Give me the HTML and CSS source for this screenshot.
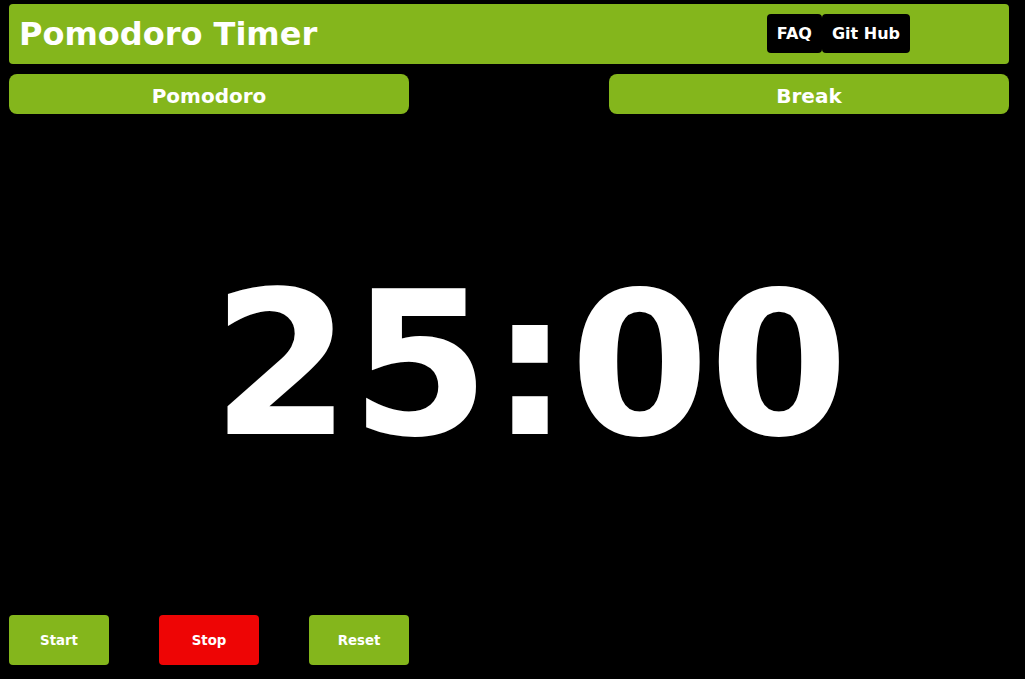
FILE: index.html
```html
<!DOCTYPE html>
<html lang="en">
<head>
<meta charset="utf-8">
<title>Pomodoro Timer</title>
<link rel="stylesheet" href="styles.css">
</head>
<body>
<div class="app">
  <header class="topbar">
    <h1 class="title">Pomodoro Timer</h1>
    <nav class="links">
      <a class="link" href="#">FAQ</a>
      <a class="link" href="#">Git Hub</a>
    </nav>
  </header>
  <div class="modes">
    <button class="mode">Pomodoro</button>
    <button class="mode">Break</button>
  </div>
  <div class="timer">25:00</div>
  <div class="controls">
    <button class="ctl ctl-green">Start</button>
    <button class="ctl ctl-red">Stop</button>
    <button class="ctl ctl-green">Reset</button>
  </div>
</div>
</body>
</html>
```
FILE: styles.css
```css
html, body {
  margin: 0;
  padding: 0;
  background: #000;
  height: 100%;
}
body {
  font-family: "DejaVu Sans", sans-serif;
  color: #fff;
}
.app {
  width: 1000px;
  margin-left: 9px;
  padding-top: 4px;
  display: flex;
  flex-direction: column;
  height: 675px;
}
.topbar {
  height: 60px;
  background: #84b61c;
  border-radius: 4px;
  display: flex;
  align-items: center;
  padding-left: 10px;
  box-sizing: border-box;
}
.title {
  margin: 0;
  font-size: 32px;
  font-weight: bold;
  flex: 1;
}
.links {
  display: flex;
  margin-right: 99px;
  margin-bottom: 2px;
}
.link {
  display: block;
  background: #000;
  color: #fff;
  text-decoration: none;
  font-weight: bold;
  font-size: 16px;
  padding: 0 10px;
  height: 39px;
  line-height: 39px;
  border-radius: 4px;
}
.modes {
  display: flex;
  justify-content: space-between;
  margin-top: 10px;
}
.mode {
  width: 400px;
  height: 40px;
  border: 0;
  border-radius: 8px;
  background: #84b61c;
  color: #fff;
  font-family: "DejaVu Sans", sans-serif;
  font-weight: bold;
  font-size: 20px;
  padding: 4px 0 0;
}
.timer {
  flex: 1;
  display: flex;
  align-items: center;
  justify-content: center;
  font-weight: bold;
  font-size: 200px;
  padding-left: 42px;
}
.controls {
  display: flex;
  gap: 50px;
  margin-bottom: 14px;
}
.ctl {
  width: 100px;
  height: 50px;
  border: 0;
  border-radius: 4px;
  color: #fff;
  font-family: "DejaVu Sans", sans-serif;
  font-weight: bold;
  font-size: 13.333px;
  padding: 0;
}
.ctl-green { background: #84b61c; }
.ctl-red { background: #ee0505; }
```
